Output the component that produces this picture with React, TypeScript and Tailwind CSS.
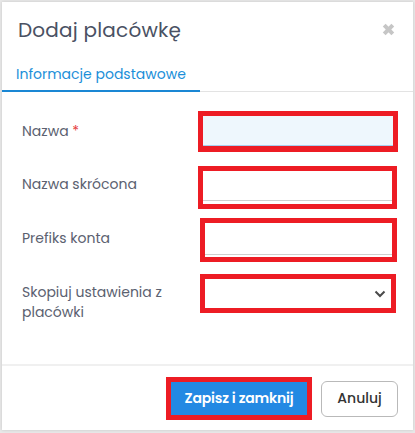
import React from "react";

const font = { fontFamily: "Poppins, Inter, 'Noto Sans', sans-serif" };

const App = () => {
  return (
    <div className="w-[415px] h-[433px] bg-[#e8e8e8] pt-[2px] pl-[2px] overflow-hidden" style={font}>
      <div className="w-[411px] h-[428px] bg-white shadow-[0_0_3px_rgba(0,0,0,0.15)] flex flex-col">
        {/* header */}
        <div className="h-[56px] flex items-center justify-between pl-[16px] pr-[18px]">
          <h1 className="text-[20px] text-[#4a5163] tracking-[0.2px]">Dodaj placówkę</h1>
          <svg width="13" height="13" viewBox="0 0 13 13" className="-mt-[2px]">
            <path d="M2.2 2.2 L10.8 10.8 M10.8 2.2 L2.2 10.8" stroke="#c6c6c6" strokeWidth="4" strokeLinecap="butt" />
          </svg>
        </div>

        {/* tabs */}
        <div className="flex border-b border-[#e3e3e3] h-[34px]">
          <div className="w-[198px] border-b-2 border-[#1a87d4] -mb-px pl-[14px] pt-[6px] text-[14px] text-[#1b8fd9]">
            Informacje podstawowe
          </div>
        </div>

        {/* body */}
        <div className="flex-1 pl-[20px] pr-[15px] text-[14px] text-[#5b6170]">
          <div className="flex items-center mt-[19px]">
            <label className="w-[176px]">
              Nazwa <span className="text-[#e53e3e]">*</span>
            </label>
            <div className="w-[200px] border-[5px] border-b-[6px] border-[#ed1c24]">
              <div className="h-[30px] bg-[#eef7fd] border-b border-[#a7cfee]" />
            </div>
          </div>

          <div className="flex items-center mt-[14px]">
            <label className="w-[176px] -mt-[6px]">Nazwa skrócona</label>
            <div className="w-[199px] border-[5px] border-[#ed1c24]">
              <div className="h-[33px] pb-[3px]">
                <div className="h-full border-b border-[#cfcfcf]" />
              </div>
            </div>
          </div>

          <div className="flex items-center mt-[9px]">
            <label className="w-[178px] -mt-[4px]">Prefiks konta</label>
            <div className="w-[197px] border-[5px] border-[#ed1c24]">
              <div className="h-[34px] pb-[2px]">
                <div className="h-full border-b border-[#cfcfcf]" />
              </div>
            </div>
          </div>

          <div className="flex items-start mt-[12px]">
            <label className="w-[178px] mt-[8px] leading-[20px]">
              Skopiuj ustawienia z
              <br />
              placówki
            </label>
            <div className="w-[196px] border-[5px] border-[#ed1c24]">
              <div className="h-[29px] flex items-center justify-end pr-[5px]">
                <svg width="12" height="8" viewBox="0 0 12 8">
                  <path d="M1.5 1.5 L6 6 L10.5 1.5" fill="none" stroke="#4a4a4a" strokeWidth="2" />
                </svg>
              </div>
            </div>
          </div>
        </div>

        {/* footer */}
        <div className="h-[66px] border-t-2 border-[#f0f0f0] flex items-center justify-end pr-[15px] gap-[9px] pt-[1px]">
          <div className="border-[5px] border-[#ed1c24]">
            <button className="w-[136px] h-[33px] bg-[#2389e3] text-white text-[14px] font-semibold tracking-[-0.2px]">
              Zapisz i zamknij
            </button>
          </div>
          <button className="w-[77px] h-[36px] border border-[#b9b9b9] rounded-[6px] text-[14px] text-[#333] font-medium">
            Anuluj
          </button>
        </div>
      </div>
    </div>
  );
};

export default App;
